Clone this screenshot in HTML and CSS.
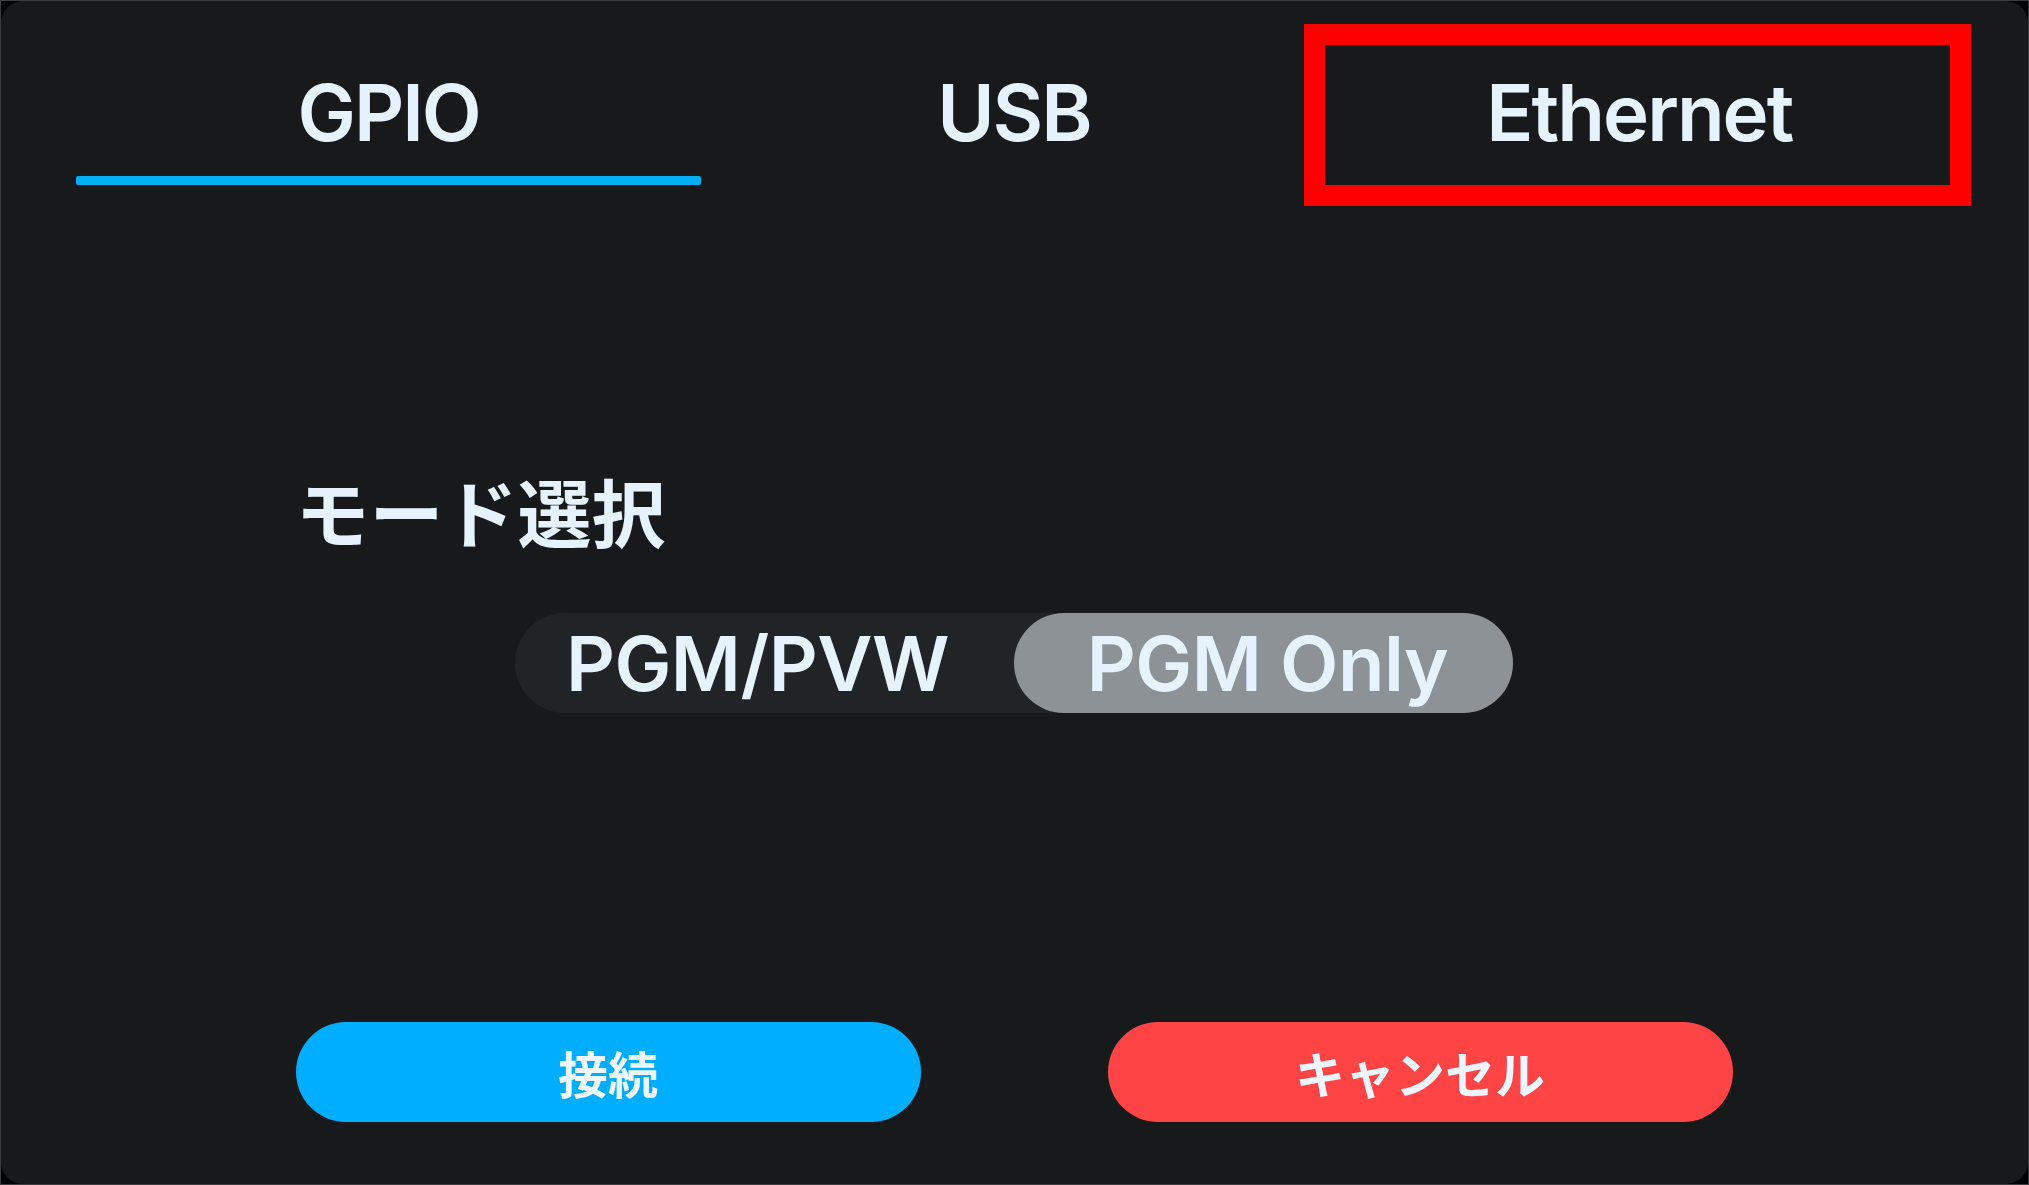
FILE: index.html
```html
<!DOCTYPE html>
<html lang="ja">
<head>
<meta charset="utf-8">
<title>Mode</title>
<link rel="stylesheet" href="styles.css">
</head>
<body>
<div class="frame">
  <div class="panel">
    <nav class="tabs">
      <div class="tab active">GPIO</div>
      <div class="tab">USB</div>
      <div class="tab">Ethernet</div>
    </nav>
    <section class="content">
      <div class="label">モード選択</div>
      <div class="toggle">
        <div class="seg first">PGM/PVW</div>
        <div class="seg selected">PGM Only</div>
      </div>
      <div class="actions">
        <button class="btn connect">接続</button>
        <button class="btn cancel">キャンセル</button>
      </div>
    </section>
  </div>
  <div class="highlight"></div>
</div>
</body>
</html>
```
FILE: styles.css
```css
html, body {
  margin: 0;
  padding: 0;
  background: #000;
}
body {
  width: 2029px;
  height: 1185px;
  overflow: hidden;
  font-family: Inter, "Noto Sans CJK JP", sans-serif;
}
.frame {
  position: relative;
  width: 2029px;
  height: 1185px;
  box-sizing: border-box;
  border: 1px solid #3b3c3d;
  background: #000;
}
.panel {
  height: 100%;
  box-sizing: border-box;
  background: #18191b;
  border-radius: 22px;
  padding: 0 76px 0 75px;
  display: flex;
  flex-direction: column;
}
.tabs {
  display: grid;
  grid-template-columns: repeat(3, 1fr);
  margin-top: 73px;
}
.tab {
  font-family: Inter, sans-serif;
  font-weight: 600;
  font-size: 78px;
  line-height: 78px;
  letter-spacing: -2px;
  color: #e6f3ff;
  text-align: center;
}
.tab::after {
  content: "";
  display: block;
  height: 9px;
  margin-top: 24px;
  border-radius: 2px;
  background: transparent;
}
.tab.active::after {
  background: #00aef2;
}
.content {
  width: 1437px;
  align-self: center;
  display: flex;
  flex-direction: column;
}
.label {
  font-family: "Noto Sans CJK JP", sans-serif;
  font-weight: 700;
  font-size: 74px;
  line-height: 74px;
  color: #e6f3ff;
  margin-top: 288px;
  margin-left: 0;
}
.toggle {
  align-self: center;
  margin-top: 66px;
  width: 998px;
  height: 100px;
  border-radius: 50px;
  background: #212426;
  display: grid;
  grid-template-columns: 1fr 1fr;
}
.seg {
  display: flex;
  align-items: center;
  justify-content: center;
  border-radius: 50px;
  font-family: Inter, sans-serif;
  font-weight: 600;
  font-size: 76px;
  letter-spacing: -0.5px;
  color: #e6f3ff;
}
.seg.first {
  padding-right: 14px;
}
.seg.selected {
  background: #8d9297;
  padding-left: 8px;
}
.actions {
  margin-top: 309px;
  display: flex;
  justify-content: space-between;
}
.btn {
  width: 625px;
  height: 100px;
  border: 0;
  border-radius: 50px;
  font-family: "Noto Sans CJK JP", sans-serif;
  font-weight: 700;
  font-size: 50px;
  color: #eef6ff;
  padding: 0;
}
.btn.connect {
  background: #00aeff;
}
.btn.cancel {
  background: #ff4446;
}
.highlight {
  position: absolute;
  left: 1303px;
  top: 23px;
  width: 667px;
  height: 182px;
  box-sizing: border-box;
  border: 21px solid #ff0000;
}
```
